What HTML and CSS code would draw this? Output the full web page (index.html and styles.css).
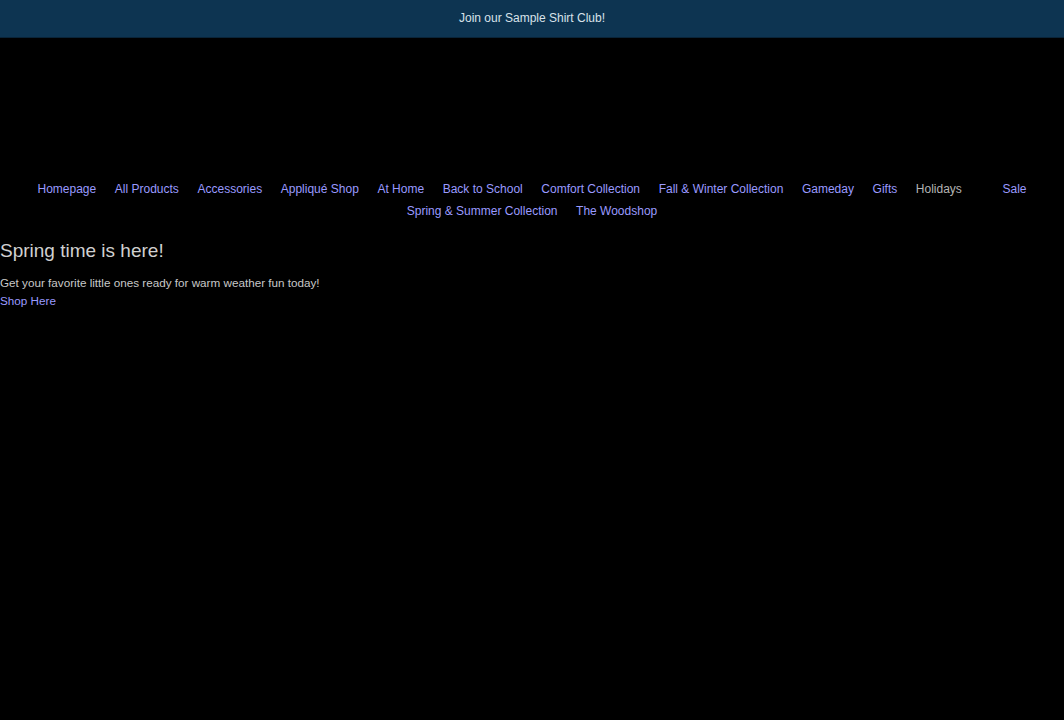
FILE: index.html
```html
<!doctype html>
<html>
	<head>
		<meta charset="utf-8">
		<title>Spring time is here!</title>
		<link rel="stylesheet" href="styles.css">
	</head>
	<body>
		<div class="announce">Join our Sample Shirt Club!</div>
		<div class="header"></div>
		<ul class="menu">
			<li><a href="#">Homepage</a></li>
			<li><a href="#">All Products</a></li>
			<li><a href="#">Accessories</a></li>
			<li><a href="#">Appliqué Shop</a></li>
			<li><a href="#">At Home</a></li>
			<li><a href="#">Back to School</a></li>
			<li><a href="#">Comfort Collection</a></li>
			<li><a href="#">Fall &amp; Winter Collection</a></li>
			<li><a href="#">Gameday</a></li>
			<li><a href="#">Gifts</a></li>
			<li class="has-sub"><span>Holidays</span></li>
			<li><a href="#">Sale</a></li>
			<li><a href="#">Spring &amp; Summer Collection</a></li>
			<li><a href="#">The Woodshop</a></li>
		</ul>
		<div class="hero">
			<h2>Spring time is here!</h2>
			<p>Get your favorite little ones ready for warm weather fun today!</p>
			<a href="#">Shop Here</a>
		</div>
	</body>
</html>
```

FILE: styles.css
```css
html, body {
	margin: 0px;
	background: #000;
	color: #c8c8c8;
	font-family: "Liberation Sans", Arial, sans-serif;
}
a {
	color: #9a9aff;
	text-decoration: none;
}
.announce {
	background: #0d3451;
	color: #d8e2ea;
	font-size: 12px;
	height: 37px;
	line-height: 37px;
	text-align: center;
	border-bottom: 1px solid #0a2438;
}
.header {
	height: 140px;
}
.menu {
	list-style: none;
	margin: 0px;
	padding: 0px 20px;
	display: flex;
	flex-wrap: wrap;
	justify-content: center;
	column-gap: 18.6px;
	font-size: 12px;
	line-height: 22px;
}
.menu li {
	white-space: nowrap;
}
.menu .has-sub {
	margin-right: 22px;
}
.menu .has-sub span {
	color: #b4b4b4;
}
.hero {
	padding-top: 15px;
	font-size: 11.7px;
}
.hero h2 {
	margin: 0px;
	font-size: 19px;
	font-weight: normal;
	line-height: 28px;
	color: #d0d0d0;
}
.hero p {
	margin: 0px;
	padding-top: 9px;
	line-height: 18px;
}
.hero a {
	display: block;
	line-height: 18px;
}
```
